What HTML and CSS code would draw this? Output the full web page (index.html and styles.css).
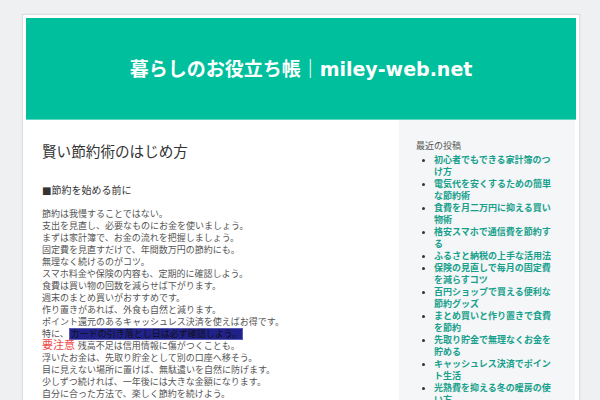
FILE: index.html
```html
<!DOCTYPE html>
<html lang="ja">
<head>
<meta charset="utf-8">
<title>暮らしのお役立ち帳｜miley-web.net</title>
<link rel="stylesheet" href="styles.css">
</head>
<body>
<div class="page">
  <div class="container">
    <header class="site-header">
      <p class="site-title">暮らしのお役立ち帳｜miley-web.net</p>
    </header>
    <div class="columns">
      <main class="main">
        <h1 class="entry-title">賢い節約術のはじめ方</h1>
        <h2 class="section-title">■節約を始める前に</h2>
        <p class="entry-text">節約は我慢することではない。<br>支出を見直し、必要なものにお金を使いましょう。<br>まずは家計簿で、お金の流れを把握しましょう。<br>固定費を見直すだけで、年間数万円の節約にも。<br>無理なく続けるのがコツ。<br>スマホ料金や保険の内容も、定期的に確認しよう。<br>食費は買い物の回数を減らせば下がります。<br>週末のまとめ買いがおすすめです。<br>作り置きがあれば、外食も自然と減ります。<br>ポイント還元のあるキャッシュレス決済を使えばお得です。<br>特に、<span class="marker">カードの引き落とし日は必ず確認しよう。</span><br><span class="alert">要注意</span> 残高不足は信用情報に傷がつくことも。<br>浮いたお金は、先取り貯金として別の口座へ移そう。<br>目に見えない場所に置けば、無駄遣いを自然に防げます。<br>少しずつ続ければ、一年後には大きな金額になります。<br>自分に合った方法で、楽しく節約を続けよう。</p>
      </main>
      <aside class="sidebar">
        <h3 class="widget-title">最近の投稿</h3>
        <ul class="post-list">
          <li><a href="#">初心者でもできる家計簿のつけ方</a></li>
          <li><a href="#">電気代を安くするための簡単な節約術</a></li>
          <li><a href="#">食費を月二万円に抑える買い物術</a></li>
          <li><a href="#">格安スマホで通信費を節約する</a></li>
          <li><a href="#">ふるさと納税の上手な活用法</a></li>
          <li><a href="#">保険の見直しで毎月の固定費を減らすコツ</a></li>
          <li><a href="#">百円ショップで買える便利な節約グッズ</a></li>
          <li><a href="#">まとめ買いと作り置きで食費を節約</a></li>
          <li><a href="#">先取り貯金で無理なくお金を貯める</a></li>
          <li><a href="#">キャッシュレス決済でポイント生活</a></li>
          <li><a href="#">光熱費を抑える冬の暖房の使い方</a></li>
          <li><a href="#">車の維持費を見直して節約する方法</a></li>
        </ul>
      </aside>
    </div>
  </div>
</div>
</body>
</html>
```
FILE: styles.css
```css
html, body {
  margin: 0;
  padding: 0;
  background: #eef0f1;
  font-family: "DejaVu Sans", "Noto Sans CJK JP", sans-serif;
  color: #444;
}
.page {
  padding: 14px 0 0 22px;
  height: 386px;
  overflow: hidden;
}
.container {
  width: 550px;
  background: #fff;
  border: 1px solid #dcdfe2;
  padding: 3px;
  box-shadow: 0 0 2px rgba(0, 0, 0, 0.06);
}
.site-header {
  height: 101px;
  background: #00bf9d;
  border-bottom: 1px solid #5fd8c3;
  display: flex;
  align-items: center;
  justify-content: center;
}
.site-title {
  margin: 0;
  font-size: 19px;
  font-weight: bold;
  color: #fff;
  line-height: 24px;
}
.columns {
  display: flex;
  align-items: stretch;
}
.main {
  width: 373px;
  padding: 22px 16px 0 16px;
  box-sizing: border-box;
}
.entry-title {
  margin: 0;
  font-size: 14.6px;
  line-height: 20px;
  font-weight: normal;
  color: #333;
}
.section-title {
  margin: 22px 0 0 0;
  font-size: 10px;
  line-height: 14px;
  font-weight: normal;
  color: #333;
}
.entry-text {
  margin: 10px 0 0 0;
  font-size: 9px;
  line-height: 12px;
  color: #555;
}
.marker {
  background: #21218a;
  border: 1px solid #5a5ab4;
  color: #111;
  padding: 0 1px;
}
.alert {
  color: #f04848;
  font-size: 11px;
  line-height: 12px;
}
.sidebar {
  width: 176px;
  background: #f4f6f7;
  padding: 20px 17px 0 17px;
  box-sizing: border-box;
  min-height: 280px;
}
.widget-title {
  margin: 0 0 2px 0;
  font-size: 9px;
  line-height: 12px;
  font-weight: normal;
  color: #555;
}
.post-list {
  margin: 0;
  padding: 0 0 0 18px;
  font-size: 9px;
  line-height: 12px;
  color: #333;
}
.post-list a {
  color: #17a08c;
  font-weight: bold;
  text-decoration: none;
}
```
